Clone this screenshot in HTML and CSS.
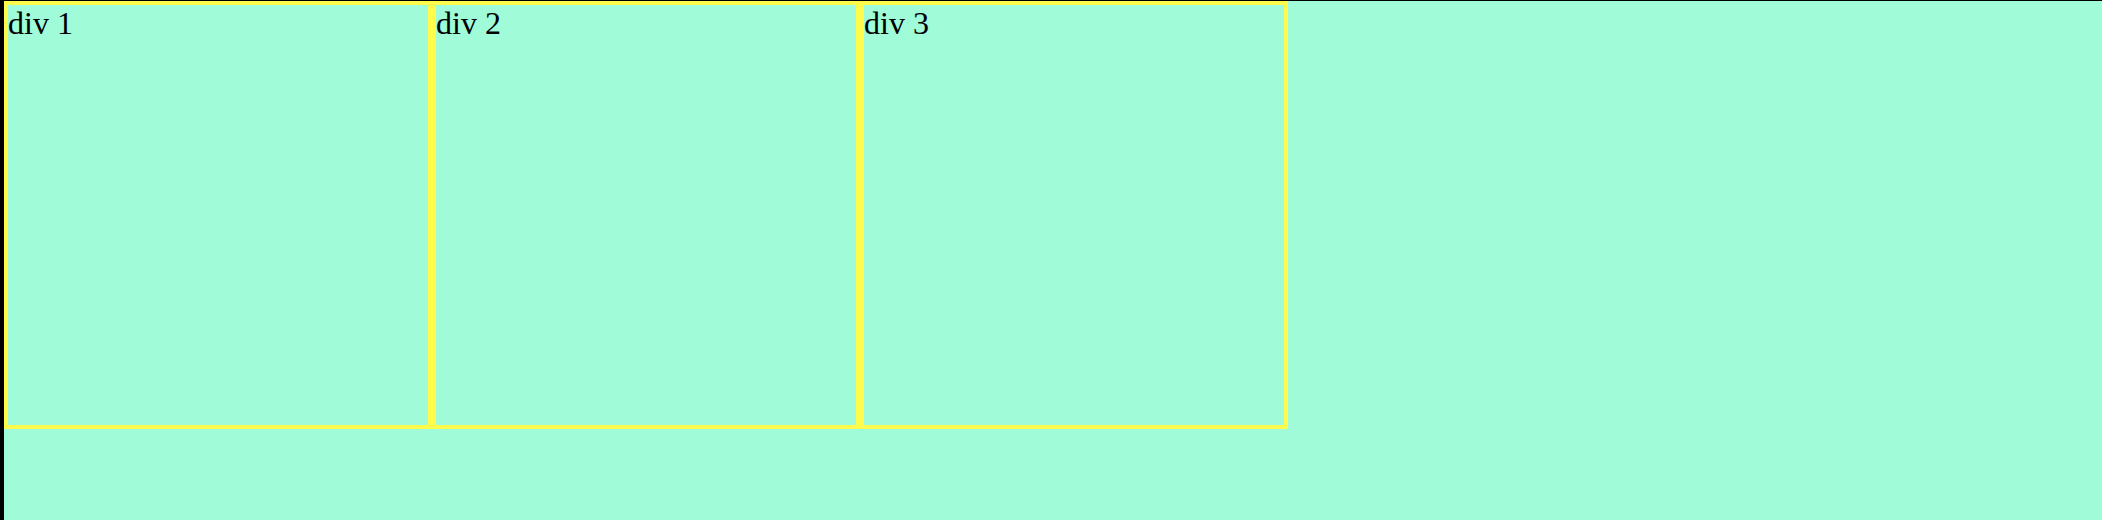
FILE: index.html
```html
<!DOCTYPE html>
<html>
<head>
<meta charset="utf-8">
<link rel="stylesheet" href="styles.css">
</head>
<body>
<div class="row">
  <div class="box">div 1</div>
  <div class="box">div 2</div>
  <div class="box">div 3</div>
</div>
</body>
</html>
```
FILE: styles.css
```css
html {
  background: #000;
  height: 100%;
}
body {
  margin: 1px 0 0 4px;
  background: #9ffbd8;
  min-height: 519px;
  font-family: "Liberation Serif", "Times New Roman", serif;
  font-size: 32px;
  color: #000;
}
.row {
  display: flex;
  align-items: flex-start;
}
.box {
  width: 420px;
  height: 420px;
  border: 4px solid #fffb4c;
  flex: none;
}
```
